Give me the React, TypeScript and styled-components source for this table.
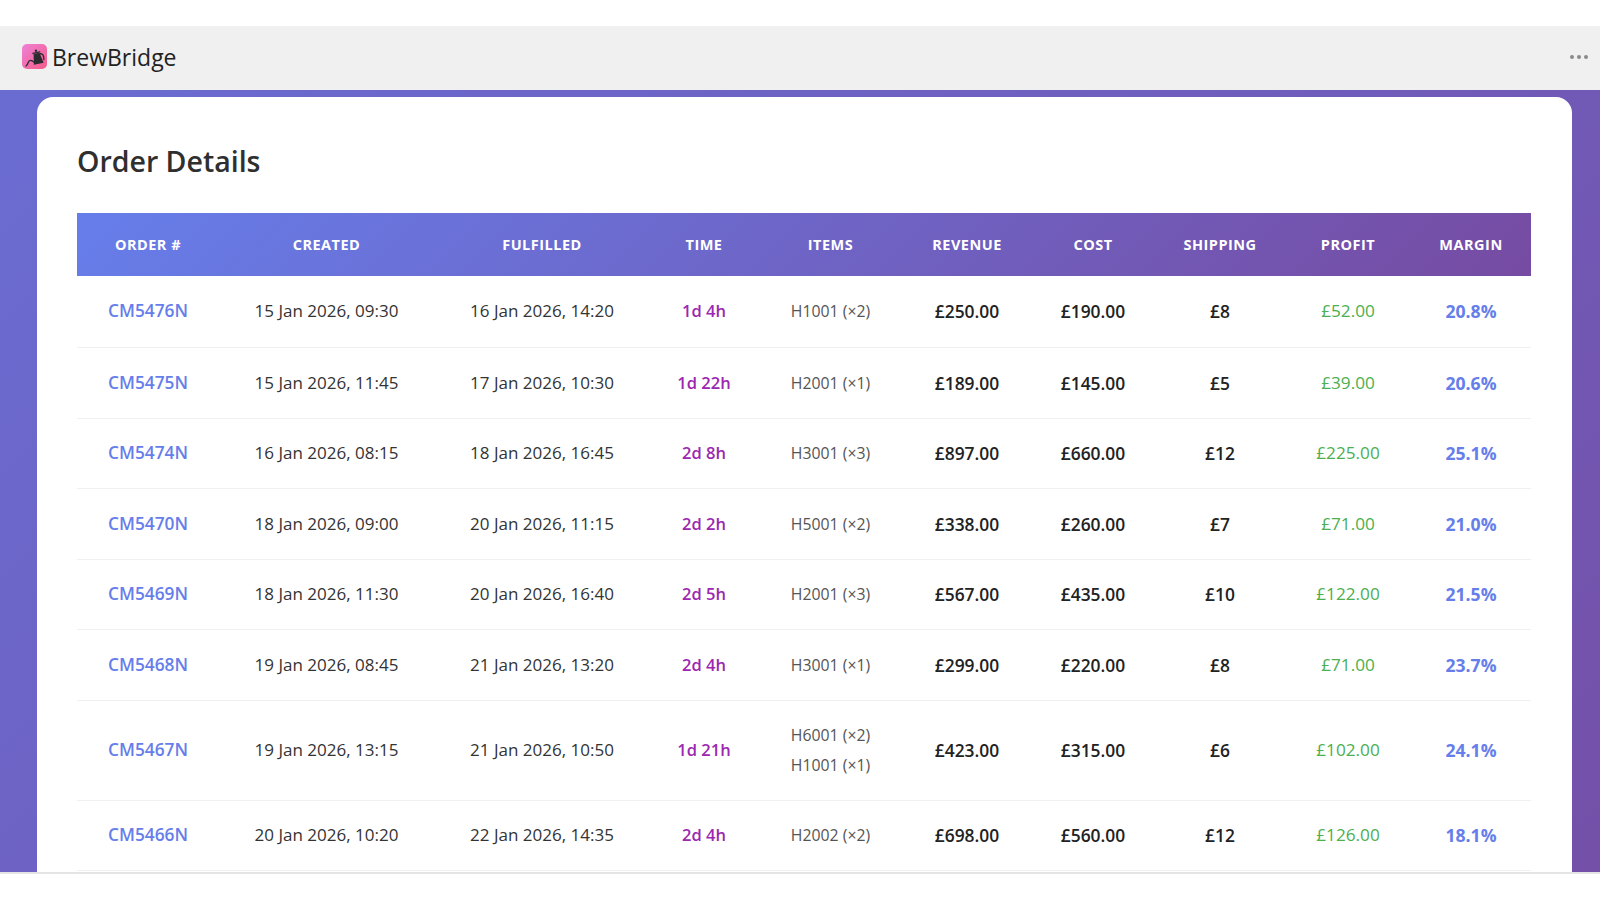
import React from "react";
import styled, { createGlobalStyle } from "styled-components";

const GlobalStyle = createGlobalStyle`
  html, body { margin: 0; padding: 0; background: #ffffff; }
  body { font-family: "Open Sans", "Noto Sans", "Liberation Sans", sans-serif; color: #333; }
  * { box-sizing: border-box; }
`;

type Order = {
  id: string;
  created: string;
  fulfilled: string;
  time: string;
  items: string[];
  revenue: string;
  cost: string;
  shipping: string;
  profit: string;
  margin: string;
};

const orders: Order[] = [
  { id: "CM5476N", created: "15 Jan 2026, 09:30", fulfilled: "16 Jan 2026, 14:20", time: "1d 4h", items: ["H1001 (×2)"], revenue: "£250.00", cost: "£190.00", shipping: "£8", profit: "£52.00", margin: "20.8%" },
  { id: "CM5475N", created: "15 Jan 2026, 11:45", fulfilled: "17 Jan 2026, 10:30", time: "1d 22h", items: ["H2001 (×1)"], revenue: "£189.00", cost: "£145.00", shipping: "£5", profit: "£39.00", margin: "20.6%" },
  { id: "CM5474N", created: "16 Jan 2026, 08:15", fulfilled: "18 Jan 2026, 16:45", time: "2d 8h", items: ["H3001 (×3)"], revenue: "£897.00", cost: "£660.00", shipping: "£12", profit: "£225.00", margin: "25.1%" },
  { id: "CM5470N", created: "18 Jan 2026, 09:00", fulfilled: "20 Jan 2026, 11:15", time: "2d 2h", items: ["H5001 (×2)"], revenue: "£338.00", cost: "£260.00", shipping: "£7", profit: "£71.00", margin: "21.0%" },
  { id: "CM5469N", created: "18 Jan 2026, 11:30", fulfilled: "20 Jan 2026, 16:40", time: "2d 5h", items: ["H2001 (×3)"], revenue: "£567.00", cost: "£435.00", shipping: "£10", profit: "£122.00", margin: "21.5%" },
  { id: "CM5468N", created: "19 Jan 2026, 08:45", fulfilled: "21 Jan 2026, 13:20", time: "2d 4h", items: ["H3001 (×1)"], revenue: "£299.00", cost: "£220.00", shipping: "£8", profit: "£71.00", margin: "23.7%" },
  { id: "CM5467N", created: "19 Jan 2026, 13:15", fulfilled: "21 Jan 2026, 10:50", time: "1d 21h", items: ["H6001 (×2)", "H1001 (×1)"], revenue: "£423.00", cost: "£315.00", shipping: "£6", profit: "£102.00", margin: "24.1%" },
  { id: "CM5466N", created: "20 Jan 2026, 10:20", fulfilled: "22 Jan 2026, 14:35", time: "2d 4h", items: ["H2002 (×2)"], revenue: "£698.00", cost: "£560.00", shipping: "£12", profit: "£126.00", margin: "18.1%" },
];

const columns: { label: string; width: number }[] = [
  { label: "Order #", width: 142 },
  { label: "Created", width: 215 },
  { label: "Fulfilled", width: 216 },
  { label: "Time", width: 108 },
  { label: "Items", width: 145 },
  { label: "Revenue", width: 128 },
  { label: "Cost", width: 124 },
  { label: "Shipping", width: 130 },
  { label: "Profit", width: 126 },
  { label: "Margin", width: 120 },
];

const Page = styled.div`
  padding-top: 26px;
`;

const Frame = styled.div`
  height: 848px;
  display: flex;
  flex-direction: column;
  overflow: hidden;
  border-bottom: 2px solid #e4e4e4;
`;

const TopBar = styled.header`
  flex: 0 0 64px;
  display: flex;
  align-items: center;
  justify-content: space-between;
  padding: 0 12px 3px 22px;
  background: #f0f0f0;
`;

const Brand = styled.div`
  display: flex;
  align-items: center;
  gap: 5px;
  font-size: 23px;
  font-weight: 500;
  color: #222;
`;

const MoreButton = styled.div`
  display: flex;
  gap: 3px;
  padding: 4px 0;
`;

const Dot = styled.span`
  width: 4px;
  height: 4px;
  border-radius: 50%;
  background: #8a8a8a;
`;

const Stage = styled.main`
  flex: 1;
  overflow: hidden;
  padding: 7px 28px 0 37px;
  background: linear-gradient(135deg, #6a6cd2 0%, #7450a8 100%);
`;

const Card = styled.section`
  background: #ffffff;
  border-radius: 16px;
  padding: 45px 41px 40px 40px;
  min-height: 900px;
`;

const Title = styled.h1`
  margin: 0 0 31px;
  font-size: 28.5px;
  line-height: 1.4;
  font-weight: 600;
  color: #2f2f2f;
`;

const Table = styled.table`
  width: 100%;
  table-layout: fixed;
  border-collapse: collapse;
`;

const Col = styled.col<{ $w: number }>`
  width: ${(p) => p.$w}px;
`;

const HeadRow = styled.tr`
  background: linear-gradient(135deg, #667eea 0%, #764ba2 100%);
`;

const Th = styled.th`
  padding: 21px 8px;
  font-size: 14.5px;
  line-height: 21px;
  font-weight: 700;
  color: #ffffff;
  text-transform: uppercase;
  letter-spacing: 0.5px;
  text-align: center;
`;

const Tr = styled.tr`
  border-bottom: 1px solid #f0f0f0;

  &:first-child > td {
    height: 72px;
  }
`;

type Tone = "link" | "plain" | "time" | "items" | "money" | "profit" | "margin";

const toneStyles: Record<Tone, string> = {
  link: "color: #667eea; font-weight: 600; font-size: 17.3px;",
  plain: "color: #333333; font-weight: 400; font-size: 17px;",
  time: "color: #9c27b0; font-weight: 600; font-size: 16.5px;",
  items: "color: #555555; font-weight: 400; font-size: 15.8px;",
  money: "color: #222222; font-weight: 600; font-size: 17.4px;",
  profit: "color: #4caf50; font-weight: 500; font-size: 17.2px;",
  margin: "color: #667eea; font-weight: 700; font-size: 17.6px;",
};

const Td = styled.td<{ $tone: Tone }>`
  height: 70px;
  padding: 0 6px;
  line-height: 22.5px;
  text-align: center;
  vertical-align: middle;
  white-space: nowrap;
  ${(p) => toneStyles[p.$tone]}
`;

const ItemList = styled.div`
  display: flex;
  flex-direction: column;
  align-items: center;
  gap: 7px;
  padding: 23.5px 0;
`;

const Logo = () => (
  <svg width="25" height="25" viewBox="0 0 25 25">
    <defs>
      <linearGradient id="lg" x1="0" y1="0" x2="1" y2="1">
        <stop offset="0" stopColor="#ee82d8" />
        <stop offset="1" stopColor="#f45b87" />
      </linearGradient>
    </defs>
    <rect x="0" y="0" width="25" height="25" rx="5" fill="url(#lg)" />
    <g transform="rotate(-12 15 14)" stroke="#2b2b30" fill="#2b2b30" strokeLinecap="round" strokeLinejoin="round">
      <path d="M12.5 9.5 L18.5 9.5 L20.5 20 L10.5 20 Z" stroke="none" />
      <path d="M12 8.6 L19 8.6" strokeWidth="1.4" fill="none" />
      <circle cx="15.5" cy="6.6" r="1.2" stroke="none" />
      <path d="M19 10.5 Q23 11 21.3 17" strokeWidth="1.3" fill="none" />
      <path d="M11.5 17.5 C9 14.5 7 14 5.5 16.5 C4.6 18 3.8 19.2 2.6 19.6" strokeWidth="1.3" fill="none" />
    </g>
  </svg>
);

export default function App() {
  return (
    <>
      <GlobalStyle />
      <Page>
        <Frame>
          <TopBar>
            <Brand>
              <Logo />
              <span>BrewBridge</span>
            </Brand>
            <MoreButton>
              <Dot />
              <Dot />
              <Dot />
            </MoreButton>
          </TopBar>
          <Stage>
            <Card>
              <Title>Order Details</Title>
              <Table>
                <colgroup>
                  {columns.map((c) => (
                    <Col key={c.label} $w={c.width} />
                  ))}
                </colgroup>
                <thead>
                  <HeadRow>
                    {columns.map((c) => (
                      <Th key={c.label}>{c.label}</Th>
                    ))}
                  </HeadRow>
                </thead>
                <tbody>
                  {orders.map((o) => (
                    <Tr key={o.id}>
                      <Td $tone="link">{o.id}</Td>
                      <Td $tone="plain">{o.created}</Td>
                      <Td $tone="plain">{o.fulfilled}</Td>
                      <Td $tone="time">{o.time}</Td>
                      <Td $tone="items">
                        <ItemList>
                          {o.items.map((it) => (
                            <span key={it}>{it}</span>
                          ))}
                        </ItemList>
                      </Td>
                      <Td $tone="money">{o.revenue}</Td>
                      <Td $tone="money">{o.cost}</Td>
                      <Td $tone="money">{o.shipping}</Td>
                      <Td $tone="profit">{o.profit}</Td>
                      <Td $tone="margin">{o.margin}</Td>
                    </Tr>
                  ))}
                </tbody>
              </Table>
            </Card>
          </Stage>
        </Frame>
      </Page>
    </>
  );
}
